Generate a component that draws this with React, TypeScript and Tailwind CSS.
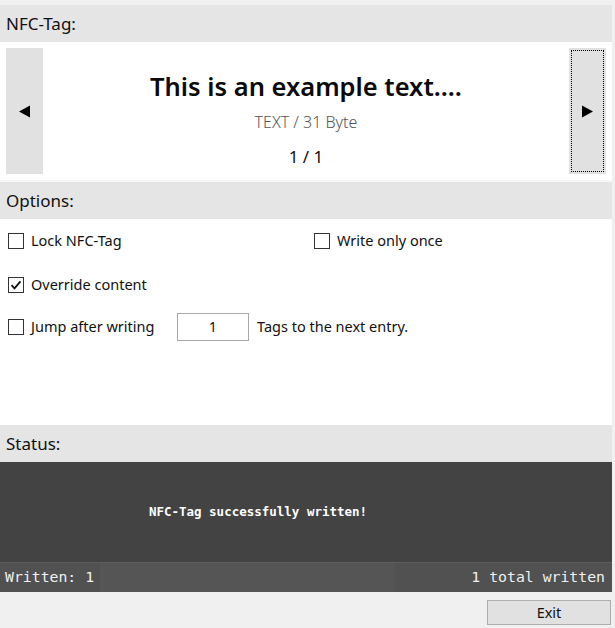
import React from "react";

const ui = { fontFamily: '"Noto Sans", "Open Sans", sans-serif' };
const mono = { fontFamily: '"DejaVu Sans Mono", "Liberation Mono", monospace' };

function Header({ label }: { label: string }) {
  return (
    <div className="h-[37px] bg-[#e5e5e5] flex items-center pl-[6px] text-[17px] text-[#111]">
      {label}
    </div>
  );
}

function Check({ label, checked = false }: { label: string; checked?: boolean }) {
  return (
    <div className="flex items-center">
      <span className="w-[16px] h-[16px] border border-[#333] bg-white flex items-center justify-center">
        {checked && (
          <svg width="12" height="12" viewBox="0 0 12 12">
            <path d="M1.5 6.2 L4.5 9.3 L10.5 2.3" fill="none" stroke="#111" strokeWidth="1.8" />
          </svg>
        )}
      </span>
      <span className="ml-[7px] text-[14.5px] text-[#111]">{label}</span>
    </div>
  );
}

function Arrow({ dir }: { dir: "left" | "right" }) {
  return (
    <svg width="13" height="13" viewBox="0 0 13 13">
      {dir === "left" ? (
        <polygon points="12,0.5 12,12.5 1,6.5" fill="#000" />
      ) : (
        <polygon points="1,0.5 1,12.5 12,6.5" fill="#000" />
      )}
    </svg>
  );
}

export default function App() {
  return (
    <div className="w-[615px] h-[628px] bg-[#f0f0f0] flex flex-col" style={ui}>
      <div className="w-[612px] pt-[5px] flex flex-col">
        <Header label="NFC-Tag:" />
        <div className="h-[138px] bg-white flex items-center px-[6px]">
          <button className="w-[37px] h-[126px] bg-[#e1e1e1] flex items-center justify-center">
            <Arrow dir="left" />
          </button>
          <div className="flex-1 self-stretch flex flex-col items-center pt-[27px]">
            <div className="text-[25.5px] font-semibold text-[#0a0a0a] leading-[34px]">
              This is an example text....
            </div>
            <div className="text-[16px] font-light text-[#555] leading-[22px] mt-[8px]">TEXT / 31 Byte</div>
            <div className="text-[17px] text-[#111] leading-[23px] mt-[12px]">1 / 1</div>
          </div>
          <button className="w-[37px] h-[126px] bg-[#e1e1e1] flex items-center justify-center outline-1 outline-dotted outline-black -outline-offset-[3px]">
            <Arrow dir="right" />
          </button>
        </div>
        <div className="h-[2px] bg-[#f7f7f7]" />
        <Header label="Options:" />
        <div className="h-[206px] bg-white pl-[8px] pt-[13px] flex flex-col">
          <div className="flex items-center h-[18px]">
            <div className="w-[306px]">
              <Check label="Lock NFC-Tag" />
            </div>
            <Check label="Write only once" />
          </div>
          <div className="flex items-center h-[18px] mt-[26px]">
            <Check label="Override content" checked />
          </div>
          <div className="flex items-center mt-[19px]">
            <div className="w-[169px]">
              <Check label="Jump after writing" />
            </div>
            <div className="w-[72px] h-[28px] border border-[#a8a8a8] flex items-center justify-center text-[14.5px] text-[#111]">
              1
            </div>
            <div className="ml-[8px] text-[14.5px] text-[#111]">Tags to the next entry.</div>
          </div>
        </div>
        <Header label="Status:" />
        <div
          className="h-[100px] bg-[#434343] flex items-center justify-center pr-[96px] text-white font-bold text-[12.5px]"
          style={mono}
        >
          NFC-Tag successfully written!
        </div>
        <div className="h-[30px] flex text-[#f0f0f0] text-[14.8px] border-t border-[#5d5d5d]" style={mono}>
          <div className="w-[100px] bg-[#515151] flex items-center pl-[5px]">Written: 1</div>
          <div className="flex-1 bg-[#555555]" />
          <div className="w-[217px] bg-[#515151] flex items-center justify-end pr-[7px]">1 total written</div>
        </div>
      </div>
      <div className="flex justify-end pr-[4px] pt-[8px]">
        <button className="w-[124px] h-[25px] bg-[#e1e1e1] border border-[#adadad] text-[14.5px] text-[#111] flex items-center justify-center">
          Exit
        </button>
      </div>
    </div>
  );
}
